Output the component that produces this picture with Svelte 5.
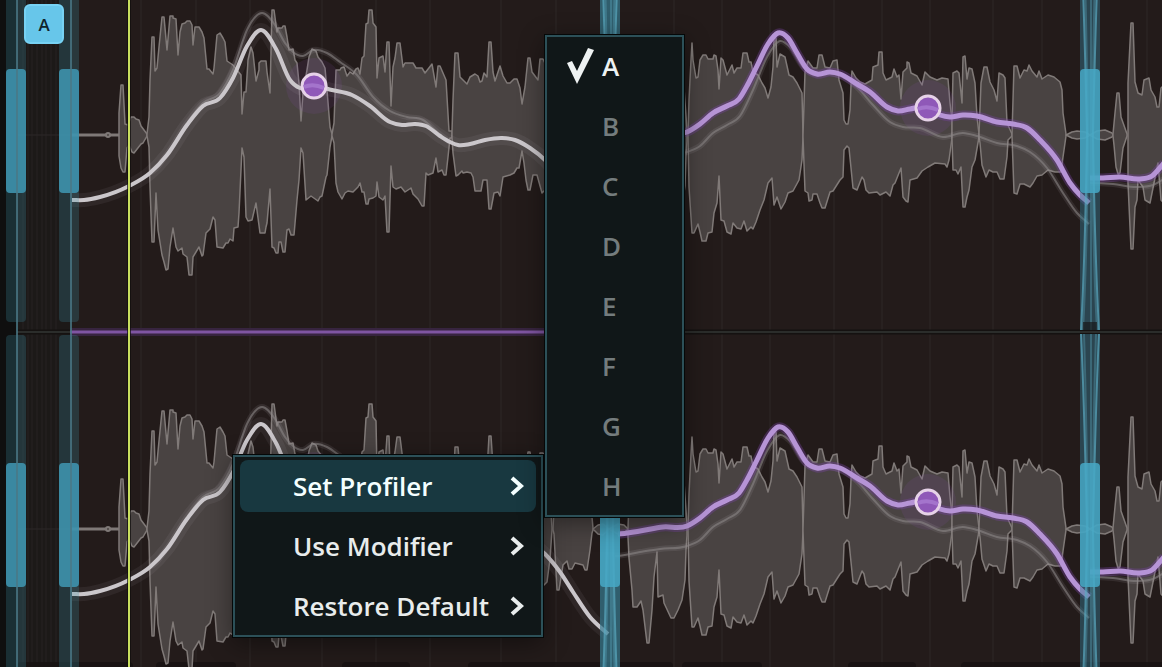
<script lang="ts">
  // Menu content
  const actions = ['Set Profiler', 'Use Modifier', 'Restore Default'];
  const profilers = ['A', 'B', 'C', 'D', 'E', 'F', 'G', 'H'];

  let activeAction = 'Set Profiler';
  let profiler = 'A';

  // Vertical distance between the two channels
  const LANE = 394;

  const beats = [141, 196, 250, 322, 376, 430, 501, 556, 674, 722, 770, 834, 882, 930, 993, 1042, 1147];
  const ticks = [23, 28, 32, 37, 42, 46, 51, 56];
  const tabs = [[17, 116], [156, 80], [342, 68], [468, 205], [682, 80], [848, 68], [961, 220]];

  // Waveform outlines: upper edge, then lower edge, both left to right
  const waves = [
    [
      '119,135 119,113 121,85 123,85 125,124 128,125 131,117 134,117 136,119 139,120 141,126 147,134',
      '119,156 121,168 123,172 125,172 127,148 129,145 132,152 134,153 141,144 143,143 147,136'
    ],
    [
      '147,134 149,117 150,80 152,37 154,37 155,71 157,68 159,47 162,17 164,17 167,50 170,16 173,16 173,18 176,19 178,55 180,32 182,24 185,23 187,21 190,21 192,25 193,45 195,27 199,27 202,32 204,38 207,69 209,69 213,74 214,68 217,35 220,33 223,38 225,42 227,61 233,65 241,75 242,114 244,92 246,92 248,60 251,47 253,53 256,81 259,70 259,63 261,61 266,61 267,72 270,93 272,10 274,10 277,32 278,28 282,28 283,26 285,26 287,37 289,50 293,49 295,60 297,63 299,83 301,121 303,93 307,70 309,57 312,49 316,51 318,57 322,62 325,68 327,90 330,127 332,134',
      '147,136 149,147 150,187 152,242 154,242 156,193 158,230 162,255 164,262 166,270 168,269 170,247 173,228 176,247 178,251 182,248 183,254 187,257 189,275 192,275 193,257 199,247 202,256 203,255 206,233 210,229 213,217 215,220 217,247 223,248 226,243 228,243 230,239 233,241 234,228 238,227 239,213 242,148 244,157 246,217 248,221 252,220 256,203 260,233 265,233 266,227 267,223 270,189 272,247 274,248 276,253 278,253 279,242 281,242 283,252 285,252 287,230 289,229 291,235 294,235 297,200 299,180 301,148 303,153 306,200 311,196 318,201 320,197 322,196 326,177 327,175 330,147 332,136'
    ],
    [
      '332,134 334,123 336,70 340,70 341,68 344,67 347,76 350,72 353,74 356,69 358,68 360,74 362,58 364,56 366,24 368,23 369,10 372,10 373,23 376,27 377,78 379,58 381,57 383,56 385,72 387,42 389,42 391,106 393,67 395,58 397,43 400,43 403,67 405,63 413,63 416,68 422,68 425,73 432,64 436,87 438,66 440,66 443,73 446,80 447,97 449,131 452,131',
      '332,136 334,143 336,183 338,192 342,199 345,193 348,191 353,192 356,189 358,187 360,183 362,192 364,192 366,204 368,204 369,199 373,198 376,196 377,182 379,197 383,200 385,196 387,232 389,232 391,166 393,187 396,189 401,187 405,192 411,188 413,194 418,199 422,206 424,206 426,173 428,175 433,173 436,158 438,172 442,170 444,175 446,175 448,157 450,138 452,138'
    ],
    [
      '452,131 453,100 455,53 458,53 460,77 463,80 467,84 470,77 475,74 478,76 480,82 482,81 484,73 487,77 489,42 491,42 493,72 495,81 498,72 500,66 503,76 507,83 510,83 514,79 517,79 520,88 522,104 525,87 528,58 530,58 532,72 538,80 540,59 543,59 548,70 552,134',
      '452,138 453,153 456,176 458,175 462,171 463,173 467,172 471,173 473,177 475,191 481,191 483,180 487,180 489,209 491,209 494,193 498,192 500,196 503,177 510,175 514,173 517,168 519,168 522,151 524,163 526,180 528,190 530,190 533,175 537,175 542,193 547,188 550,165 552,136'
    ],
    [
      '553,134 556,80 562,70 580,72 588,80 593,134',
      '553,136 554,140 557,196 559,196 563,171 567,167 569,175 572,175 575,169 583,171 585,176 587,176 590,156 592,139 593,136'
    ],
    ['593,135 598,131 603,130 609,135 618,130 624,131 628,135', '593,135 598,140 603,141 609,135 618,140 624,139 628,135'],
    [
      '628,134 630,80 650,60 670,60 684,88 687,130',
      '628,136 628,143 629,164 632,196 633,213 637,213 641,207 643,216 647,249 649,249 652,216 654,183 657,158 658,203 663,201 664,209 671,224 674,224 678,216 682,206 685,186 686,156 687,141'
    ],
    [
      '688,134 689,100 691,60 692,43 693,60 696,78 698,77 700,60 703,55 706,55 708,59 713,59 714,55 716,56 718,70 719,89 721,58 723,60 727,75 732,65 734,73 737,68 741,68 743,53 747,53 749,62 751,62 753,72 758,75 762,83 765,88 768,98 771,87 773,67 774,38 776,38 777,67 780,54 785,57 789,75 793,77 797,83 802,93 803,134',
      '688,136 689,187 692,233 694,233 698,224 700,232 702,241 706,241 708,233 712,232 714,213 717,203 719,176 721,220 724,221 727,232 731,234 733,223 737,228 741,229 744,221 747,231 751,227 753,229 756,222 760,210 764,200 768,183 772,178 774,205 777,197 781,209 785,202 788,193 793,191 799,180 802,160 803,137'
    ],
    [
      '803,135 805,72 808,61 813,68 817,68 819,55 822,55 825,67 830,68 833,61 837,60 839,80 843,93 844,120 846,124 848,124 850,110 851,85 852,71 856,78 860,82 865,84 872,80 873,67 878,65 879,52 882,52 883,73 886,80 892,77 894,69 897,77 899,75 901,99 903,72 907,68 907,62 909,63 911,73 917,76 922,85 925,72 930,77 937,80 942,78 948,79 950,103 952,120',
      '803,137 805,191 808,193 809,201 812,200 813,194 817,194 820,203 822,208 825,208 830,192 833,191 840,180 843,177 844,150 847,146 849,148 853,188 857,190 862,177 864,180 866,190 869,193 877,192 880,195 886,192 890,196 893,185 895,183 901,168 903,197 906,201 908,202 910,180 917,178 922,171 928,167 935,163 945,164 947,167 949,160 952,138'
    ],
    [
      '952,120 953,73 957,71 959,73 962,103 963,57 965,56 967,79 969,68 972,69 975,83 977,117 979,134',
      '952,138 953,170 956,170 958,174 961,167 963,207 965,207 967,197 969,190 972,167 975,160 979,137'
    ],
    [
      '979,134 981,83 984,67 987,67 990,82 994,90 997,101 999,73 1003,75 1005,78 1007,123 1012,134',
      '979,137 980,143 982,165 986,177 989,170 993,172 997,172 1000,179 1004,179 1007,157 1008,140 1012,136'
    ],
    [
      '1012,134 1014,66 1017,66 1020,78 1024,70 1027,71 1029,65 1032,71 1037,77 1039,71 1042,79 1048,75 1054,77 1060,82 1062,90 1063,113 1066,134',
      '1012,136 1014,193 1017,194 1020,184 1024,184 1030,187 1033,183 1037,176 1042,175 1048,170 1055,172 1061,172 1063,157 1066,136'
    ],
    ['1066,135 1072,132 1077,131 1085,132 1090,135 1097,131 1105,130 1112,133 1113,135', '1066,135 1072,138 1077,139 1085,138 1090,135 1097,139 1105,140 1112,137 1113,135'],
    ['1113,134 1115,113 1117,93 1119,93 1121,117 1127,134', '1113,136 1114,145 1116,167 1118,174 1120,173 1123,148 1127,136'],
    [
      '1128,134 1128,83 1131,23 1133,23 1135,82 1138,93 1142,95 1144,80 1149,78 1151,90 1155,97 1157,107 1159,107 1161,88 1170,80',
      '1128,136 1128,183 1131,249 1133,249 1135,207 1137,200 1138,180 1143,187 1145,200 1150,203 1152,193 1158,163 1161,200 1170,210'
    ]
  ];

  // Pitch curves
  const white = '72,200 84,200 100,197 129,186 150,173 167,155 187,125 203,106 220,98 233,78 247,46 261,30 276,49 290,80 300,88 314,86 332,90 352,95 370,106 390,122 402,125 415,124 426,126 440,136 450,142 458,145 470,144 485,140 502,138 515,140 530,148 545,160 560,178 573,198 590,223 608,240';
  const whiteGhost = '150,172 167,154 187,123 203,103 220,93 233,70 247,30 262,13 275,25 285,43 293,52 303,56 313,50 327,53 340,62 357,75 373,97 390,111 407,117 423,120 437,132 450,142';
  const purple = [
    '618,140 640,137 663,133 687,132 700,124 713,113 727,106 739,99 748,84 757,66 768,44 778,33 788,38 797,53 807,69 817,74 830,72 840,74 857,84 870,92 887,107 898,111 910,109 925,107 940,115 950,117 963,115 977,116 997,122 1013,124 1027,128 1040,140 1057,160 1070,183 1080,195 1089,203',
    '1090,178 1103,178 1120,177 1140,179 1152,176 1164,163'
  ];
  const purpleGhost = [
    '615,162 640,158 660,155 687,152 700,146 713,133 727,125 740,116 753,90 767,57 780,41 790,47 803,67 815,74 830,73 857,87 873,105 890,122 903,127 920,128 943,137 963,133 977,136 997,143 1017,146 1030,152 1047,168 1063,193 1077,213 1089,224',
    '1090,183 1113,184 1137,187 1153,185 1164,179'
  ];

  function parse(points: string) {
    return points.split(' ').map((p) => p.split(',').map(Number));
  }

  function outline([top, bottom]: string[]) {
    return [...top.split(' '), ...bottom.split(' ').reverse()].join(' ');
  }

  // Run a smooth curve through every point, weighting slopes by the gaps around them
  function smooth(points: string) {
    const p = parse(points);
    const last = p.length - 1;
    const slopes = p.map(([x, y], i) => {
      if (i === 0 || i === last) return 0;
      const before = x - p[i - 1][0];
      const after = p[i + 1][0] - x;
      const rise = (y - p[i - 1][1]) / before;
      const fall = (p[i + 1][1] - y) / after;
      return (rise * after + fall * before) / (before + after);
    });
    slopes[last] = (p[last][1] - p[last - 1][1]) / (p[last][0] - p[last - 1][0]);

    let d = `M${p[0]}`;
    for (let i = 0; i < last; i++) {
      const [x, y] = p[i];
      const [nx, ny] = p[i + 1];
      const third = (nx - x) / 3;
      d += `C${x + third},${y + slopes[i] * third} ${nx - third},${ny - slopes[i + 1] * third} ${nx},${ny}`;
    }
    return d;
  }
</script>

<main>
  <svg class="canvas" viewBox="0 0 1162 667" preserveAspectRatio="xMinYMin slice" aria-hidden="true">
    <rect width="17" height="667" fill="#0f0f0f" />
    <rect x="17" width="54" height="667" fill="#1c1918" />
    {#each ticks as x}
      <path class="tick" d="M{x},0V667" />
    {/each}
    {#each beats as x}
      <path class="beat" d="M{x},0V667" />
    {/each}

    {#each tabs as [x, width]}
      <rect class="tab" {x} y="662" {width} height="20" rx="4" />
    {/each}

    <!-- Channel divider -->
    <path d="M17,332H71M609,332H1162" stroke="#151211" stroke-width="5" />
    <path d="M17,332H71M609,332H1162" stroke="#2b2d2b" stroke-width="2" />
    <path d="M70,332H609" stroke="#37243f" stroke-width="8" />
    <path d="M70,332H609" stroke="#7f55a2" stroke-width="3" />

    {#each [0, LANE] as offset}
      <g transform="translate(0 {offset})">
        <path d="M17,135H75" stroke="#2c2928" />
        <path d="M70,135H119" stroke="#7f7977" stroke-width="3" />
        <circle cx="108" cy="135" r="2" fill="#4b4543" stroke="#7f7977" stroke-width="2" />

        {#each waves as wave}
          <polygon class="wave" points={outline(wave)} />
        {/each}

        <circle cx="314" cy="86" r="28" fill="#8c4fb4" opacity="0.12" />
        <circle cx="928" cy="108" r="28" fill="#8c4fb4" opacity="0.12" />

        <path class="glow" d={smooth(whiteGhost)} />
        <path class="ghost" d={smooth(whiteGhost)} />
        <path class="glow wide" d={smooth(white)} />
        <path class="curve" d={smooth(white)} />

        {#each purpleGhost as points}
          <path class="glow" d={smooth(points)} />
          <path class="ghost" d={smooth(points)} />
        {/each}
        {#each purple as points}
          <path class="purple-glow" d={smooth(points)} />
          <path class="curve purple" d={smooth(points)} />
        {/each}

        {#each [[314, 86], [928, 108]] as [cx, cy]}
          <circle {cx} {cy} r="12" fill="#8f58b8" stroke="#e6d2e8" stroke-width="3" />
          <path d="M{cx - 10},{cy + 1}q9,-4 20,1" fill="none" stroke="#a474cc" stroke-width="4" />
        {/each}

        <!-- Edge handles on the left -->
        {#each [6, 59] as x}
          <rect {x} y="-59" width="20" height="381" rx="4" fill="#3d8ea3" opacity="0.25" />
          <rect {x} y="69" width="20" height="124" rx="4" fill="#3e92ad" opacity="0.9" />
        {/each}

        <!-- Split handles -->
        {#each [600, 1080] as x}
          <g transform="translate({x} 0)">
            <rect y="-60" width="20" height="390" fill="#367a92" opacity={x === 600 ? 0.7 : 0.45} />
            <path class="strand" d="M1,-60Q4,0 7,135Q5,260 1,330M19,-60Q16,0 13,135Q15,260 19,330" />
            <path class="strand soft" d="M4,-60Q6,0 8,135Q7,260 3,330M16,-60Q14,0 12,135Q13,260 17,330M11,-60V330" />
            <rect y="69" width="20" height="124" rx="4" fill="#47a8c5" opacity="0.85" />
            <path d="M3,322H17V330H3Z" fill="#181819" opacity="0.7" />
          </g>
        {/each}
      </g>
    {/each}

    <path d="M17,0V667M71,0V667" stroke="#4a7886" stroke-width="2" opacity="0.8" />
    <path d="M129,0V667" stroke="#100d0c" stroke-width="4" opacity="0.7" />
    <path d="M129,0V667" stroke="#c9df5e" stroke-width="2" />
  </svg>

  <button class="badge">{profiler}</button>

  <div class="menu actions" role="menu">
    {#each actions as action}
      <button role="menuitem" class:active={action === activeAction} on:click={() => (activeAction = action)}>
        <span class="label">{action}</span>
        <svg class="chevron" width="14" height="20" viewBox="0 0 14 20" aria-hidden="true">
          <path d="M2,2L11,10L2,18" />
        </svg>
      </button>
    {/each}
  </div>

  <div class="menu profilers" role="menu">
    {#each profilers as name}
      <button
        role="menuitemradio"
        aria-checked={name === profiler}
        class:checked={name === profiler}
        on:click={() => (profiler = name)}
      >
        {#if name === profiler}
          <svg class="check" width="28" height="38" viewBox="0 0 28 38" aria-hidden="true">
            <path d="M0,15L5,13L10,23L21,0L27,2L10,36Z" />
          </svg>
        {/if}
        <span class="label">{name}</span>
      </button>
    {/each}
  </div>
</main>

<style>
  :global(body) {
    margin: 0;
    background: #231b1a;
  }

  main {
    position: relative;
    height: 100vh;
    overflow: hidden;
    font-family: 'Open Sans', 'Noto Sans', sans-serif;
  }

  .canvas {
    display: block;
    width: 100%;
    height: 100%;
  }

  .tick {
    stroke: #262322;
  }

  .beat {
    stroke: #2f2827;
  }

  .tab {
    fill: #171211;
    opacity: 0.8;
  }

  .wave {
    fill: #494342;
    stroke: #807a78;
    stroke-width: 1.5;
    stroke-linejoin: round;
  }

  .curve,
  .ghost,
  .glow,
  .purple-glow {
    fill: none;
  }

  .curve {
    stroke: #cbc7cb;
    stroke-width: 4;
  }

  .curve.purple {
    stroke: #b694d6;
    stroke-width: 5;
  }

  .ghost {
    stroke: #8b8686;
    stroke-width: 2;
    opacity: 0.6;
  }

  .glow {
    stroke: #d0c8d0;
    stroke-width: 6;
    opacity: 0.1;
  }

  .glow.wide {
    stroke-width: 14;
    opacity: 0.07;
  }

  .purple-glow {
    stroke: #7a45a8;
    stroke-width: 9;
    opacity: 0.35;
  }

  .strand {
    fill: none;
    stroke: #5ba9c0;
    stroke-width: 2;
    opacity: 0.7;
  }

  .strand.soft {
    opacity: 0.35;
  }

  .badge {
    position: absolute;
    top: 4px;
    left: 24px;
    width: 40px;
    height: 40px;
    padding: 0;
    border: 2px solid #77d2f4;
    border-radius: 6px;
    background: #67c6ea;
    color: #10242c;
    font-family: inherit;
    font-size: 17px;
    font-weight: 600;
  }

  .menu {
    position: absolute;
    display: flex;
    flex-direction: column;
    gap: 8px;
    padding: 3px 5px;
    border: 2px solid #2c5058;
    background: #101718;
    box-shadow: 0 0 0 1px #050808, 0 6px 24px rgba(0, 0, 0, 0.45);
    box-sizing: border-box;
  }

  .menu button {
    position: relative;
    display: flex;
    align-items: center;
    justify-content: space-between;
    height: 52px;
    padding: 0 12px 0 53px;
    border: 0;
    border-radius: 8px;
    background: none;
    color: #e8ecec;
    font-family: inherit;
    font-size: 26px;
    font-weight: 600;
    line-height: 36px;
    text-align: left;
  }

  .menu button.active {
    background: #183840;
    color: #f4ffff;
  }

  .actions {
    top: 455px;
    left: 233px;
    width: 310px;
  }

  .profilers {
    top: 35px;
    left: 545px;
    width: 139px;
  }

  .menu.profilers button {
    padding-left: 50px;
    color: #747c7d;
  }

  .menu.profilers button.checked {
    color: #eef2f2;
  }

  .chevron path {
    fill: none;
    stroke: currentColor;
    stroke-width: 4;
  }

  .check {
    position: absolute;
    top: 8px;
    left: 15px;
    fill: #eef2f2;
  }
</style>
